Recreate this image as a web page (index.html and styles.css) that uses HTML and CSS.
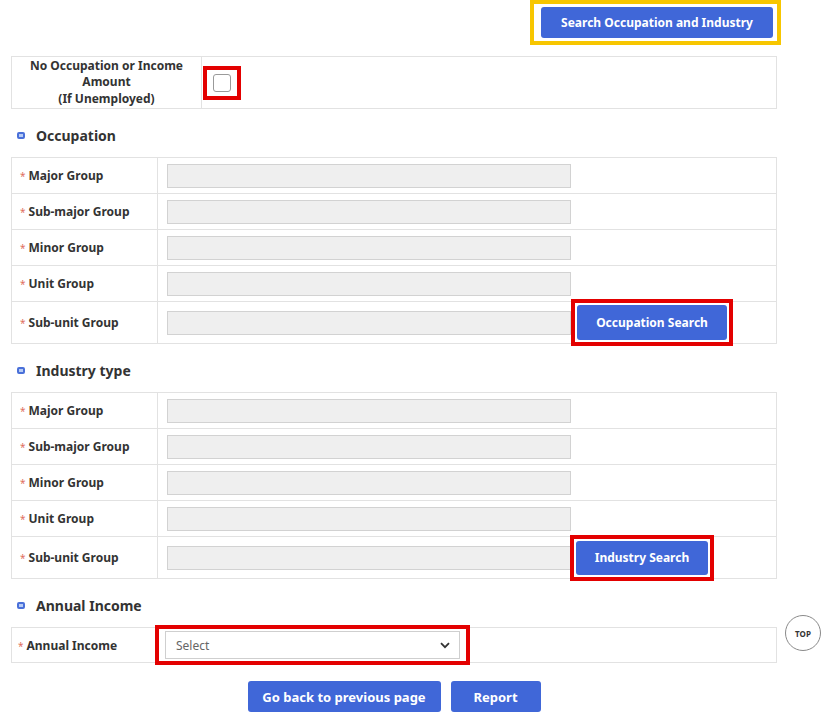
FILE: index.html
```html
<!DOCTYPE html>
<html lang="en">
<head>
    <meta charset="UTF-8">
    <meta name="viewport" content="width=device-width, initial-scale=1.0">
    <title>Occupation and Income</title>
    <link rel="stylesheet" href="styles.css">
</head>
<body>
    <div class="wrap">
        <div class="top-bar">
            <div class="mark-yellow">
                <button type="button" class="btn btn-top">Search Occupation and Industry</button>
            </div>
        </div>

        <table class="grid no-job">
            <tr>
                <th class="no-job-label">No Occupation or Income Amount<br>(If Unemployed)</th>
                <td>
                    <span class="mark-red mark-check"><span class="check"></span></span>
                </td>
            </tr>
        </table>

        <h3 class="title"><span class="bullet"></span>Occupation</h3>
        <table class="grid">
            <tr><th><span class="req">*</span>Major Group</th><td><span class="field"></span></td></tr>
            <tr><th><span class="req">*</span>Sub-major Group</th><td><span class="field"></span></td></tr>
            <tr><th><span class="req">*</span>Minor Group</th><td><span class="field"></span></td></tr>
            <tr><th><span class="req">*</span>Unit Group</th><td><span class="field"></span></td></tr>
            <tr class="last">
                <th><span class="req">*</span>Sub-unit Group</th>
                <td>
                    <div class="field-row">
                        <span class="field"></span>
                        <span class="mark-red mark-btn"><button type="button" class="btn btn-occ">Occupation Search</button></span>
                    </div>
                </td>
            </tr>
        </table>

        <h3 class="title"><span class="bullet"></span>Industry type</h3>
        <table class="grid">
            <tr><th><span class="req">*</span>Major Group</th><td><span class="field"></span></td></tr>
            <tr><th><span class="req">*</span>Sub-major Group</th><td><span class="field"></span></td></tr>
            <tr><th><span class="req">*</span>Minor Group</th><td><span class="field"></span></td></tr>
            <tr><th><span class="req">*</span>Unit Group</th><td><span class="field"></span></td></tr>
            <tr class="last">
                <th><span class="req">*</span>Sub-unit Group</th>
                <td>
                    <div class="field-row">
                        <span class="field"></span>
                        <span class="mark-red mark-btn mark-ind"><button type="button" class="btn btn-ind">Industry Search</button></span>
                    </div>
                </td>
            </tr>
        </table>

        <h3 class="title"><span class="bullet"></span>Annual Income</h3>
        <div class="income-row">
            <span class="income-label"><span class="req">*</span>Annual Income</span>
            <span class="mark-red mark-select">
                <span class="select">
                    Select
                    <svg class="chev" width="10" height="7" viewBox="0 0 10 7"><path d="M1 1.2 L5 5.2 L9 1.2" fill="none" stroke="#333" stroke-width="1.8"/></svg>
                </span>
            </span>
            <a class="to-top" href="#">TOP</a>
        </div>

        <div class="actions">
            <button type="button" class="btn btn-back">Go back to previous page</button>
            <button type="button" class="btn btn-report">Report</button>
        </div>
    </div>
</body>
</html>
```

FILE: styles.css
```css
body, html {
    margin: 0;
    background-color: #fff;
    font-family: "Noto Sans", "Open Sans", Arial, sans-serif;
    color: #333;
}
.wrap {
    width: 766px;
    margin-left: 11px;
}
.top-bar {
    display: flex;
    justify-content: flex-end;
    margin-right: -4px;
}
.mark-yellow {
    border: 4px solid #f7c600;
    padding: 3px 4px 3px 7px;
}
.btn {
    display: block;
    border: none;
    border-radius: 3px;
    background-color: #4067d8;
    color: #fff;
    font-family: inherit;
    font-size: 12px;
    font-weight: 700;
    cursor: pointer;
    padding: 0;
}
.btn-top {
    width: 232px;
    height: 31px;
}

/* tables */
.grid {
    width: 766px;
    border-collapse: collapse;
}
.grid th, .grid td {
    border: 1px solid #e2e2e2;
    height: 35px;
    padding: 0;
}
.grid th {
    width: 137px;
    padding-left: 8px;
    text-align: left;
    font-size: 12px;
    font-weight: 700;
    color: #333;
}
.grid td {
    padding-left: 9px;
}
.req {
    color: #e07060;
    font-size: 10px;
    font-weight: 400;
    margin-right: 3px;
}
.field {
    display: block;
    width: 402px;
    height: 22px;
    background-color: #efefef;
    border: 1px solid #d2d2d2;
}
.grid tr.last th, .grid tr.last td {
    height: 41px;
}
.field-row {
    display: flex;
    align-items: center;
}
.mark-red {
    display: inline-flex;
    border: 4px solid #e30000;
}
.mark-btn {
    margin: -3px 0;
    padding: 2px;
}
.btn-occ {
    width: 150px;
    height: 35px;
}
.mark-btn.mark-ind {
    margin: -3px 0 -3px -1px;
}
.btn-ind {
    width: 132px;
    height: 34px;
}

/* no job row */
.no-job {
    margin-top: 11px;
    margin-bottom: 2px;
}
.no-job th.no-job-label {
    width: 189px;
    height: 51px;
    padding: 0;
    text-align: center;
    line-height: 16.5px;
}
.no-job td {
    padding-left: 1px;
}
.mark-check {
    padding: 4px 6px;
    vertical-align: middle;
}
.check {
    display: block;
    width: 16px;
    height: 16px;
    border: 1px solid #9a9a9a;
    border-radius: 3px;
    background: #fff;
}

/* titles */
.title {
    display: flex;
    align-items: center;
    height: 20px;
    margin: 16px 0 12px;
    padding-left: 6px;
    font-size: 14px;
    font-weight: 700;
    color: #333;
}
.bullet {
    width: 4px;
    height: 3px;
    border: 2px solid #4a70d9;
    background-color: #b7ccf5;
    border-radius: 2px;
    margin-right: 11px;
}

/* annual income */
.income-row {
    position: relative;
    display: flex;
    align-items: center;
    height: 34px;
    border: 1px solid #e2e2e2;
}
.income-label {
    width: 137px;
    padding-left: 6px;
    font-size: 12px;
    font-weight: 700;
}
.mark-select {
    margin: -2px 0;
    padding: 2px 6px;
}
.select {
    display: flex;
    align-items: center;
    justify-content: space-between;
    box-sizing: border-box;
    width: 295px;
    height: 28px;
    padding: 0 9px 0 10px;
    border: 1px solid #cfcfcf;
    font-size: 12px;
    color: #666;
}
.to-top {
    position: absolute;
    left: calc(100% + 9px);
    top: -13px;
    width: 34px;
    height: 34px;
    border: 1px solid #8a8a8a;
    border-radius: 50%;
    display: flex;
    align-items: center;
    justify-content: center;
    font-size: 8px;
    font-weight: 700;
    color: #333;
    text-decoration: none;
}

/* bottom */
.actions {
    display: flex;
    justify-content: center;
    gap: 10px;
    margin-top: 18px;
}
.btn-back {
    width: 193px;
    height: 31px;
    font-size: 13px;
}
.btn-report {
    width: 90px;
    height: 31px;
    font-size: 13px;
}
```
